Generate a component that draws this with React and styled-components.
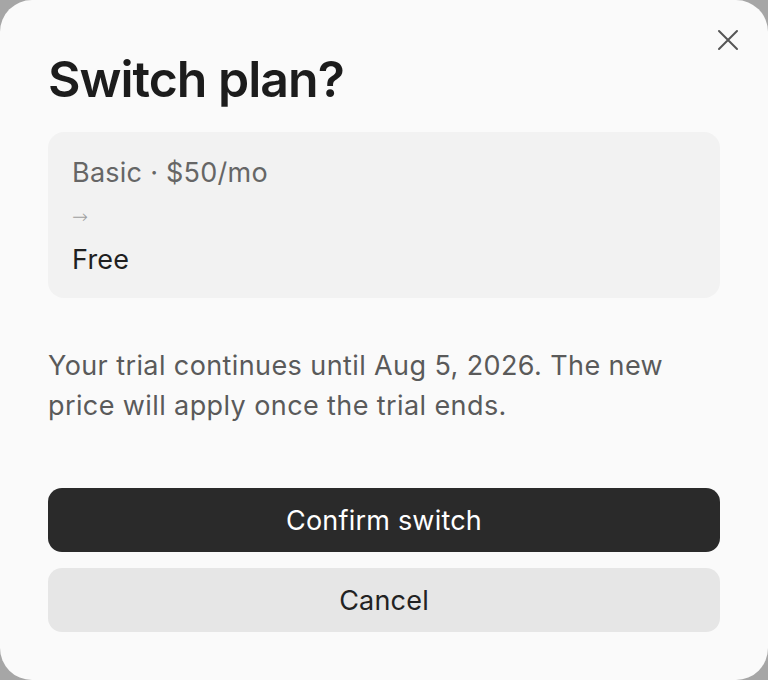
import React from "react";
import styled, { createGlobalStyle } from "styled-components";

const Global = createGlobalStyle`
  html, body { margin: 0; padding: 0; background: #a6a6a6; }
  body { font-family: Inter, "Noto Sans", sans-serif; -webkit-font-smoothing: antialiased; }
  * { box-sizing: border-box; }
`;

const Dialog = styled.div`
  position: relative;
  width: 768px;
  height: 680px;
  background: #fafafa;
  border-radius: 32px;
  padding: 50px 48px 48px;
  display: flex;
  flex-direction: column;
`;

const Close = styled.button`
  position: absolute;
  top: 28px;
  right: 28px;
  width: 24px;
  height: 24px;
  padding: 0;
  border: 0;
  background: transparent;
  display: flex;
  align-items: center;
  justify-content: center;
  color: #555;
  cursor: pointer;
`;

const Title = styled.h1`
  margin: 0;
  font-size: 50px;
  line-height: 58px;
  font-weight: 600;
  letter-spacing: -0.02em;
  color: #1c1c1c;
`;

const PlanCard = styled.div`
  margin-top: 24px;
  background: #f2f2f2;
  border-radius: 16px;
  padding: 21px 24px 19px;
  display: flex;
  flex-direction: column;
  gap: 12px;
`;

const PlanLine = styled.div`
  font-size: 27px;
  line-height: 39px;
  letter-spacing: 0.25px;
  color: ${(p) => (p.$current ? "#1f1f1f" : "#666")};
`;

const Arrow = styled.div`
  font-size: 19px;
  line-height: 24px;
  font-family: "DejaVu Sans", sans-serif;
  font-weight: 300;
  color: #a0a0a0;
`;

const Note = styled.p`
  margin: 48px 0 0;
  font-size: 27px;
  line-height: 40px;
  letter-spacing: 0.4px;
  color: #5a5a5a;
`;

const Actions = styled.div`
  margin-top: auto;
  display: flex;
  flex-direction: column;
  gap: 16px;
`;

const Button = styled.button`
  height: 64px;
  border: 0;
  border-radius: 14px;
  font-family: inherit;
  font-size: 27px;
  letter-spacing: 0.2px;
  font-weight: 400;
  background: ${(p) => (p.$primary ? "#2a2a2a" : "#e6e6e6")};
  color: ${(p) => (p.$primary ? "#ffffff" : "#222222")};
  cursor: pointer;
`;

export default function App() {
  return (
    <>
      <Global />
      <Dialog>
        <Close aria-label="Close">
          <svg width="22" height="22" viewBox="0 0 22 22" fill="none">
            <path d="M2 2L20 20M20 2L2 20" stroke="currentColor" strokeWidth="2" strokeLinecap="round" />
          </svg>
        </Close>
        <Title>Switch plan?</Title>
        <PlanCard>
          <PlanLine>Basic · $50/mo</PlanLine>
          <Arrow>→</Arrow>
          <PlanLine $current>Free</PlanLine>
        </PlanCard>
        <Note>Your trial continues until Aug 5, 2026. The new price will apply once the trial ends.</Note>
        <Actions>
          <Button $primary>Confirm switch</Button>
          <Button>Cancel</Button>
        </Actions>
      </Dialog>
    </>
  );
}
